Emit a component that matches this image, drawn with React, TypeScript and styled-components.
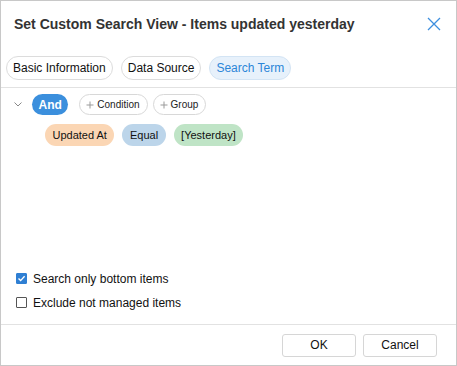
import styled, { createGlobalStyle } from "styled-components";

const GlobalStyle = createGlobalStyle`
  html, body {
    margin: 0;
    padding: 0;
    background: #fff;
  }
  body {
    font-family: "Liberation Sans", Arial, sans-serif;
    color: #222;
  }
`;

const Dialog = styled.div`
  width: 457px;
  height: 366px;
  box-sizing: border-box;
  border: 1px solid #c8c8c8;
  background: #fff;
  display: flex;
  flex-direction: column;
`;

const Header = styled.div`
  height: 45px;
  display: flex;
  align-items: center;
  justify-content: space-between;
  padding: 0 14px 0 13px;
`;

const Title = styled.h1`
  margin: 0;
  font-size: 14px;
  font-weight: 700;
  color: #333;
`;

const CloseButton = styled.button`
  border: none;
  background: none;
  padding: 0;
  width: 16px;
  height: 16px;
  display: flex;
  align-items: center;
  justify-content: center;
  cursor: pointer;
`;

const Tabs = styled.div`
  display: flex;
  gap: 8px;
  padding: 10px 5px 7px;
  border-bottom: 1px solid #e2e2e2;
`;

const Tab = styled.div<{ $active?: boolean }>`
  height: 24px;
  box-sizing: border-box;
  padding: 0 6px;
  display: flex;
  align-items: center;
  border-radius: 12px;
  font-size: 12px;
  border: 1px solid ${(p) => (p.$active ? "#d3e4f4" : "#dcdcdc")};
  background: ${(p) => (p.$active ? "#e7f1fb" : "#fff")};
  color: ${(p) => (p.$active ? "#2b86d8" : "#111")};
`;

const Body = styled.div`
  flex: 1;
  display: flex;
  flex-direction: column;
  padding: 6px 0 10px;
`;

const Conditions = styled.div`
  flex: 1;
  display: flex;
  flex-direction: column;
  gap: 9px;
`;

const GroupRow = styled.div`
  display: flex;
  align-items: center;
  padding-left: 12px;
`;

const Chevron = styled.span`
  width: 10px;
  display: flex;
  justify-content: center;
  margin-right: 9px;
`;

const AndPill = styled.div`
  height: 21px;
  padding: 0 6.5px;
  border-radius: 11px;
  background: #3b8fdd;
  color: #fff;
  font-weight: 700;
  font-size: 12px;
  display: flex;
  align-items: center;
  margin-right: 11px;
`;

const AddButton = styled.div`
  height: 21px;
  box-sizing: border-box;
  padding: 0 7px 0 6px;
  border: 1px solid #d8d8d8;
  border-radius: 11px;
  font-size: 10px;
  color: #222;
  display: flex;
  align-items: center;
  gap: 3px;
  margin-right: 5px;
`;

const ChipRow = styled.div`
  display: flex;
  gap: 8px;
  padding-left: 44px;
`;

const Chip = styled.div<{ $bg: string }>`
  height: 22px;
  padding: 0 7.5px;
  border-radius: 11px;
  background: ${(p) => p.$bg};
  font-size: 11px;
  color: #111;
  display: flex;
  align-items: center;
`;

const Options = styled.div`
  display: flex;
  flex-direction: column;
  gap: 1px;
  padding-left: 15px;
`;

const OptionRow = styled.label`
  height: 23px;
  display: flex;
  align-items: center;
  gap: 6px;
  font-size: 12px;
  color: #111;
`;

const Box = styled.span<{ $checked?: boolean }>`
  width: 11px;
  height: 11px;
  box-sizing: border-box;
  border-radius: 1px;
  border: 1px solid ${(p) => (p.$checked ? "#2f7fd3" : "#555")};
  background: ${(p) => (p.$checked ? "#2f7fd3" : "#fff")};
  display: flex;
  align-items: center;
  justify-content: center;
`;

const Footer = styled.div`
  height: 40px;
  border-top: 1px solid #e2e2e2;
  display: flex;
  justify-content: flex-end;
  align-items: center;
  gap: 7px;
  padding: 0 19px 0 0;
`;

const Button = styled.button`
  width: 74px;
  height: 23px;
  border: 1px solid #d6d6d6;
  border-radius: 3px;
  background: #fff;
  font-family: "Liberation Sans", Arial, sans-serif;
  font-size: 12px;
  color: #111;
`;

const Plus = () => (
  <svg width="8" height="8" viewBox="0 0 8 8">
    <path d="M4 0.5V7.5M0.5 4H7.5" stroke="#9a9a9a" strokeWidth="1" />
  </svg>
);

const Check = () => (
  <svg width="9" height="9" viewBox="0 0 9 9">
    <path d="M1.5 4.6L3.6 6.6L7.6 2.2" stroke="#fff" strokeWidth="1.4" fill="none" />
  </svg>
);

export default function App() {
  return (
    <>
      <GlobalStyle />
      <Dialog>
        <Header>
          <Title>Set Custom Search View - Items updated yesterday</Title>
          <CloseButton>
            <svg width="14" height="14" viewBox="0 0 14 14">
              <path d="M1 1L13 13M13 1L1 13" stroke="#3d8fdf" strokeWidth="1.3" />
            </svg>
          </CloseButton>
        </Header>
        <Tabs>
          <Tab>Basic Information</Tab>
          <Tab>Data Source</Tab>
          <Tab $active>Search Term</Tab>
        </Tabs>
        <Body>
          <Conditions>
            <GroupRow>
              <Chevron>
                <svg width="8" height="5" viewBox="0 0 8 5">
                  <path d="M0.5 0.5L4 4L7.5 0.5" stroke="#888" strokeWidth="1" fill="none" />
                </svg>
              </Chevron>
              <AndPill>And</AndPill>
              <AddButton>
                <Plus />
                Condition
              </AddButton>
              <AddButton>
                <Plus />
                Group
              </AddButton>
            </GroupRow>
            <ChipRow>
              <Chip $bg="#fbd6b4">Updated At</Chip>
              <Chip $bg="#bcd5ea">Equal</Chip>
              <Chip $bg="#bfe4c6">[Yesterday]</Chip>
            </ChipRow>
          </Conditions>
          <Options>
            <OptionRow>
              <Box $checked>
                <Check />
              </Box>
              Search only bottom items
            </OptionRow>
            <OptionRow>
              <Box />
              Exclude not managed items
            </OptionRow>
          </Options>
        </Body>
        <Footer>
          <Button>OK</Button>
          <Button>Cancel</Button>
        </Footer>
      </Dialog>
    </>
  );
}
